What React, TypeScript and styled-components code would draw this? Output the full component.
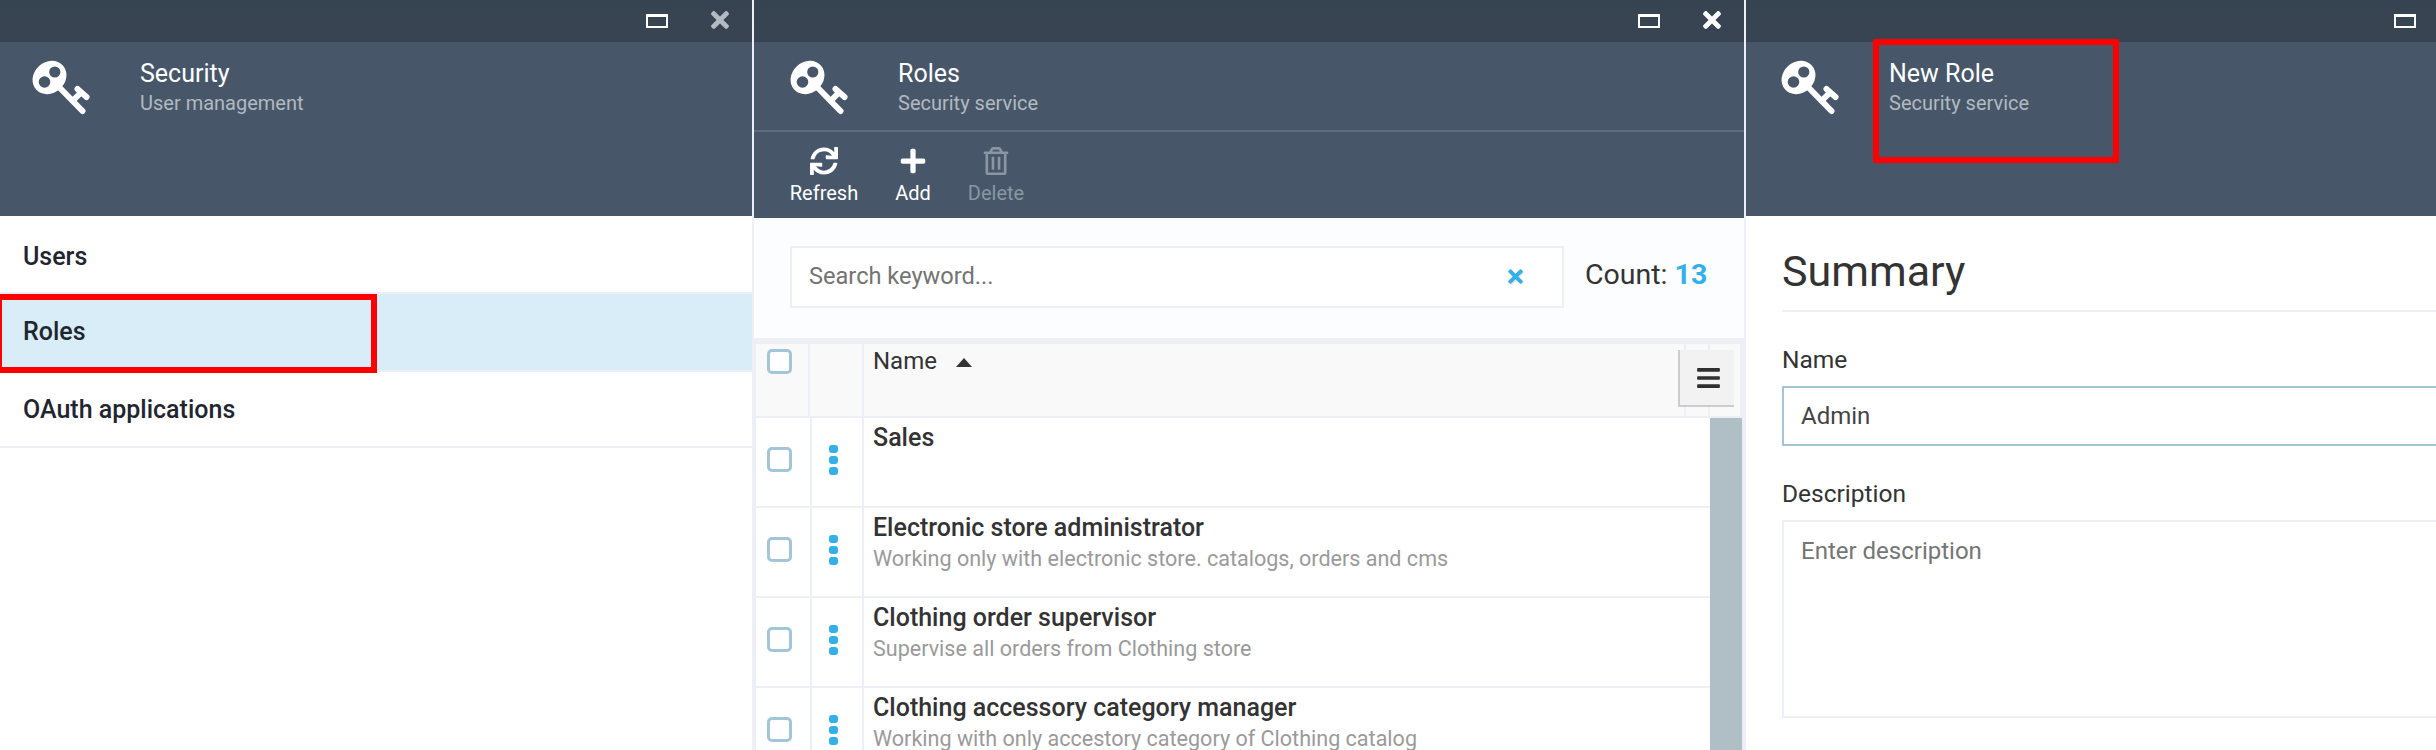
import React from 'react';
import styled, { createGlobalStyle } from 'styled-components';
import { FaBars, FaPlus, FaRegTrashAlt, FaSync, FaTimes } from 'react-icons/fa';

const GlobalStyle = createGlobalStyle`
  html, body {
    margin: 0;
    padding: 0;
    height: 750px;
    overflow: hidden;
    background: #fff;
    font-family: Roboto, "Liberation Sans", sans-serif;
    color: #333;
  }
  * { box-sizing: border-box; }
`;

const Page = styled.div`
  display: flex;
  width: 2436px;
  height: 750px;
  overflow: hidden;
`;

const Blade = styled.section<{ $width: number }>`
  flex: 0 0 ${p => p.$width}px;
  height: 750px;
  display: flex;
  flex-direction: column;
  background: #fff;
  border-right: 2px solid #eceff6;
  overflow: hidden;
`;

const TopBar = styled.div`
  height: 42px;
  flex: none;
  display: flex;
  justify-content: flex-end;
  align-items: center;
  gap: 42px;
  padding-right: 22px;
  background: linear-gradient(#364350, #384451);
  box-shadow: 2px 0 0 #fff;
`;

const Maximize = styled.span`
  width: 22px;
  height: 14px;
  border: 2px solid #fff;
  border-top-width: 3px;
`;

const Close = styled(FaTimes)<{ $muted?: boolean }>`
  width: 20px;
  height: 26px;
  margin-top: -2px;
  color: ${p => (p.$muted ? '#b3bac1' : '#fff')};
`;

const Head = styled.header<{ $inset: number; $height: number }>`
  flex: none;
  height: ${p => p.$height}px;
  background: #475769;
  box-shadow: 2px 0 0 #fff;
  display: flex;
  align-items: flex-start;
  gap: 50px;
  padding: 18px 0 0 ${p => p.$inset}px;
`;

const KeySvg = styled.svg`
  width: 58px;
  height: 56px;
  flex: none;
`;

const Titles = styled.div`
  padding-top: 0;
`;

const Title = styled.div`
  font-size: 25px;
  line-height: 28px;
  color: #fff;
`;

const Subtitle = styled.div`
  margin-top: 2px;
  font-size: 20px;
  line-height: 26px;
  color: #b2b9c1;
`;

const Head2 = styled.div`
  flex: none;
  background: #475769;
  box-shadow: 2px 0 0 #fff;
`;

const Head2Top = styled.div`
  height: 90px;
  border-bottom: 2px solid #5e6c7c;
  display: flex;
  align-items: flex-start;
  gap: 50px;
  padding: 18px 0 0 36px;
`;

const Toolbar = styled.div`
  height: 86px;
  display: flex;
  padding-left: 34px;
  gap: 33px;
`;

const ToolButton = styled.div<{ $disabled?: boolean; $width: number }>`
  width: ${p => p.$width}px;
  display: flex;
  flex-direction: column;
  align-items: center;
  padding-top: 15px;
  font-size: 20px;
  line-height: 24px;
  white-space: nowrap;
  color: ${p => (p.$disabled ? '#8a96a3' : '#fff')};
  svg { width: 28px; height: 28px; margin-bottom: 6px; }
`;

const NavList = styled.div`
  display: flex;
  flex-direction: column;
`;

const NavItem = styled.div<{ $active?: boolean }>`
  position: relative;
  height: 78px;
  padding: 0 0 2px 23px;
  display: flex;
  align-items: center;
  font-size: 25px;
  font-weight: 500;
  color: #1f2630;
  background: ${p => (p.$active ? '#d8edf8' : '#fff')};
  border-bottom: 2px solid #eceff6;
  &:first-child { padding-top: 4px; padding-bottom: 0; }
  &:last-child { height: 76px; padding-bottom: 0; }
`;

const Highlight = styled.div`
  position: absolute;
  left: -4px;
  top: 0;
  width: 381px;
  height: 79px;
  border: 6px solid #ff0000;
  z-index: 2;
`;

const TitleHighlight = styled.div`
  position: absolute;
  left: 1873px;
  top: 39px;
  width: 246px;
  height: 124px;
  border: 6px solid #ff0000;
  z-index: 2;
`;

const SearchBar = styled.div`
  flex: none;
  height: 120px;
  background: #fcfdff;
  display: flex;
  align-items: flex-start;
  padding: 28px 0 0 36px;
  gap: 21px;
`;

const SearchBox = styled.div`
  width: 774px;
  height: 62px;
  border: 2px solid #eceff6;
  background: #fff;
  display: flex;
  align-items: center;
  justify-content: space-between;
  padding: 0 38px 2px 17px;
  font-size: 23.6px;
  color: #737373;
`;

const ClearIcon = styled(FaTimes)`
  width: 17px;
  height: 21px;
  color: #33b0e8;
  filter: drop-shadow(1px 1px 0 #dfe3e6);
`;

const Count = styled.div`
  font-size: 28.5px;
  line-height: 58px;
  color: #333;
  b { color: #33b0e8; font-weight: 700; }
`;

const Table = styled.div`
  flex: 1;
  border-left: 2px solid #eceff6;
  border-top: 6px solid #eceff6;
  border-right: 2px solid #eceff6;
  display: flex;
  flex-direction: column;
  overflow: hidden;
`;

const HeaderRow = styled.div`
  position: relative;
  flex: none;
  height: 74px;
  display: grid;
  grid-template-columns: 54px 54px 1fr 24px 32px;
  background: #f9f9f9;
  border-bottom: 2px solid #eceff6;
`;

const HeaderCell = styled.div`
  border-right: 2px solid #eceff6;
  &:last-of-type { border-right: none; }
`;

const HeaderCheckCell = styled(HeaderCell)`
  padding: 5px 0 0 11px;
`;

const HeaderName = styled(HeaderCell)`
  padding: 3px 0 0 9px;
  font-size: 24px;
  line-height: 28px;
  display: flex;
  align-items: flex-start;
  gap: 19px;
`;

const SortArrow = styled.span`
  margin-top: 11px;
  width: 0;
  height: 0;
  border-left: 8px solid transparent;
  border-right: 8px solid transparent;
  border-bottom: 9px solid #333;
`;

const ColumnMenu = styled.div`
  position: absolute;
  right: 8px;
  top: 6px;
  width: 56px;
  height: 57px;
  background: #f2f2f2;
  border-left: 2px solid #ccc;
  border-bottom: 2px solid #ccc;
  display: flex;
  align-items: center;
  justify-content: center;
  padding-left: 2px;
  color: #2f2f2f;
  svg { width: 23px; height: 26px; }
`;

const Checkbox = styled.span`
  display: block;
  width: 25px;
  height: 25px;
  border: 3px solid #a2c5d8;
  border-radius: 5px;
  background: #fff;
`;

const TableBody = styled.div`
  flex: 1;
  display: flex;
  overflow: hidden;
`;

const Rows = styled.div`
  flex: 1;
  min-width: 0;
`;

const Scrollbar = styled.div`
  flex: 0 0 32px;
  background: #b0bec5;
`;

const Row = styled.div`
  height: 90px;
  display: grid;
  grid-template-columns: 56px 52px 1fr;
  background: #fff;
  border-bottom: 2px solid #eceff6;
`;

const CheckCell = styled.div`
  display: flex;
  align-items: center;
  padding: 0 0 5px 11px;
  border-right: 2px solid #eceff6;
`;

const DotsCell = styled.div`
  display: flex;
  flex-direction: column;
  align-items: center;
  justify-content: center;
  gap: 3px;
  padding: 0 8px 5px 0;
  border-right: 2px solid #eceff6;
`;

const Dot = styled.span`
  width: 9px;
  height: 8px;
  border-radius: 3px;
  background: #33b0e8;
`;

const NameCell = styled.div`
  padding: 6px 0 0 9px;
`;

const RowTitle = styled.div`
  font-size: 25px;
  line-height: 28px;
  font-weight: 500;
  color: #333;
`;

const RowText = styled.div`
  margin-top: 4px;
  font-size: 21.56px;
  line-height: 26px;
  color: #9a9a9a;
`;

const Form = styled.div`
  flex: 1;
  padding: 0 0 0 36px;
`;

const FormHeading = styled.h2`
  margin: 0 0 34px;
  height: 96px;
  padding-top: 29px;
  font-size: 43px;
  line-height: 52px;
  font-weight: 400;
  color: #333;
  border-bottom: 2px solid #eceff6;
`;

const Label = styled.div`
  font-size: 24.5px;
  line-height: 28px;
  color: #333;
  margin-bottom: 12px;
`;

const NameInput = styled.div`
  height: 60px;
  margin-bottom: 34px;
  border: 2px solid #a2c5d8;
  padding: 0 17px;
  display: flex;
  align-items: center;
  font-size: 24px;
  color: #444;
`;

const DescriptionInput = styled.div`
  height: 198px;
  border: 2px solid #eceff6;
  padding: 16px 17px;
  font-size: 24px;
  line-height: 26px;
  color: #757575;
`;

const KeyIcon = () => (
  <KeySvg viewBox="0 0 58 56">
    <ellipse cx="17.5" cy="17.5" rx="18" ry="15.5" transform="rotate(-42 17.5 17.5)" fill="#fff" />
    <circle cx="12.5" cy="22" r="5.8" fill="#475769" />
    <circle cx="22.8" cy="12" r="5.6" fill="#475769" />
    <path d="M26 26 L50.5 51 M40.5 41 L49 32.5 M45.5 29 L54.5 37" stroke="#fff" strokeWidth="6" strokeLinecap="round" fill="none" />
  </KeySvg>
);

const roles = [
  { name: 'Sales', text: '' },
  { name: 'Electronic store administrator', text: 'Working only with electronic store. catalogs, orders and cms' },
  { name: 'Clothing order supervisor', text: 'Supervise all orders from Clothing store' },
  { name: 'Clothing accessory category manager', text: 'Working with only accestory category of Clothing catalog' },
];

export default function App() {
  return (
    <Page>
      <GlobalStyle />
      <Blade $width={754}>
        <TopBar>
          <Maximize />
          <Close $muted />
        </TopBar>
        <Head $inset={32} $height={174}>
          <KeyIcon />
          <Titles>
            <Title>Security</Title>
            <Subtitle>User management</Subtitle>
          </Titles>
        </Head>
        <NavList>
          <NavItem>Users</NavItem>
          <NavItem $active>
            Roles
            <Highlight />
          </NavItem>
          <NavItem>OAuth applications</NavItem>
        </NavList>
      </Blade>

      <Blade $width={992}>
        <TopBar>
          <Maximize />
          <Close />
        </TopBar>
        <Head2>
          <Head2Top>
            <KeyIcon />
            <Titles>
              <Title>Roles</Title>
              <Subtitle>Security service</Subtitle>
            </Titles>
          </Head2Top>
          <Toolbar>
            <ToolButton $width={72}>
              <FaSync />
              Refresh
            </ToolButton>
            <ToolButton $width={40}>
              <FaPlus />
              Add
            </ToolButton>
            <ToolButton $disabled $width={60}>
              <FaRegTrashAlt />
              Delete
            </ToolButton>
          </Toolbar>
        </Head2>
        <SearchBar>
          <SearchBox>
            Search keyword...
            <ClearIcon />
          </SearchBox>
          <Count>
            Count: <b>13</b>
          </Count>
        </SearchBar>
        <Table>
          <HeaderRow>
            <HeaderCheckCell>
              <Checkbox />
            </HeaderCheckCell>
            <HeaderCell />
            <HeaderName>
              Name
              <SortArrow />
            </HeaderName>
            <HeaderCell />
            <HeaderCell />
            <ColumnMenu>
              <FaBars />
            </ColumnMenu>
          </HeaderRow>
          <TableBody>
            <Rows>
              {roles.map(role => (
                <Row key={role.name}>
                  <CheckCell>
                    <Checkbox />
                  </CheckCell>
                  <DotsCell>
                    <Dot />
                    <Dot />
                    <Dot />
                  </DotsCell>
                  <NameCell>
                    <RowTitle>{role.name}</RowTitle>
                    {role.text && <RowText>{role.text}</RowText>}
                  </NameCell>
                </Row>
              ))}
            </Rows>
            <Scrollbar />
          </TableBody>
        </Table>
      </Blade>

      <Blade $width={756}>
        <TopBar>
          <Maximize />
          <Close />
        </TopBar>
        <Head $inset={35} $height={174}>
          <KeyIcon />
          <Titles>
            <Title>New Role</Title>
            <Subtitle>Security service</Subtitle>
          </Titles>
        </Head>
        <Form>
          <FormHeading>Summary</FormHeading>
          <Label>Name</Label>
          <NameInput>Admin</NameInput>
          <Label>Description</Label>
          <DescriptionInput>Enter description</DescriptionInput>
        </Form>
      </Blade>
      <TitleHighlight />
    </Page>
  );
}
